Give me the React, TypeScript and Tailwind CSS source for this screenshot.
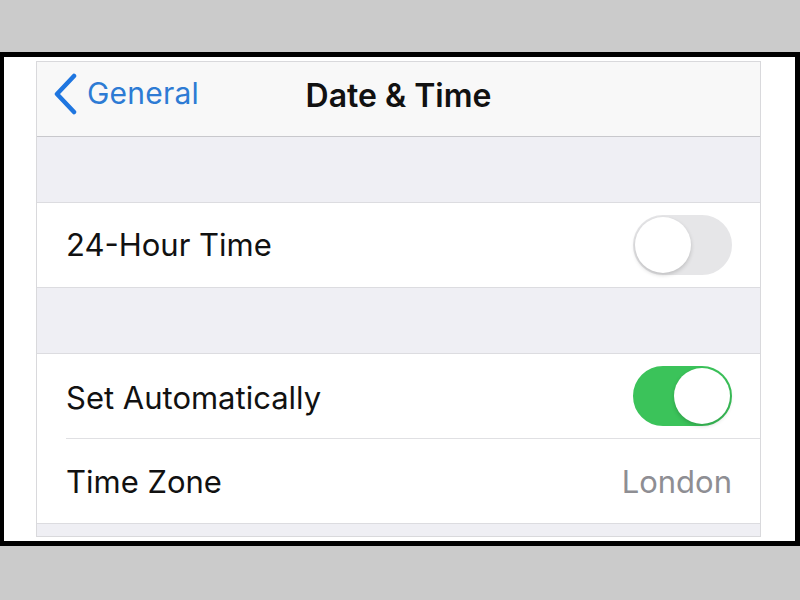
import { useState } from 'react'

interface SwitchProps {
  on: boolean
  onToggle: () => void
}

function Switch({ on, onToggle }: SwitchProps) {
  return (
    <button
      onClick={onToggle}
      className={`relative h-[60px] w-[99px] rounded-full border-2 transition-colors ${
        on ? 'border-[#3bc35a] bg-[#3bc35a]' : 'border-[#e6e6e8] bg-[#e6e6e8]'
      }`}
    >
      <span
        className={`absolute top-[0px] h-[56px] w-[56px] rounded-full bg-white shadow-[0_2px_4px_rgba(0,0,0,0.18)] transition-all ${
          on ? 'left-[39px]' : 'left-[0px]'
        }`}
      />
    </button>
  )
}

export default function App() {
  const [hour24, setHour24] = useState(false)
  const [auto, setAuto] = useState(true)

  return (
    <div
      className="flex h-[600px] w-[800px] flex-col bg-[#cbcbcb] pt-[52px]"
      style={{ fontFamily: 'Inter, "Liberation Sans", sans-serif' }}
    >
      {/* framed phone capture */}
      <div className="flex h-[494px] flex-col border-t-[5px] border-r-[5px] border-b-[5px] border-l-4 border-black bg-white pt-1 pr-[34px] pb-1 pl-8">
        <div className="flex flex-1 flex-col border border-[#d9d9dc] bg-[#efeff4]">
          {/* Navigation bar */}
          <div className="relative flex h-[75px] items-center justify-center border-b border-[#c8c8cc] bg-[#f8f8f8] pb-[7px]">
            <button className="absolute left-[15px] top-[9px] flex items-center gap-[9px] text-[#2d7bd4]">
              <svg width="26" height="42" viewBox="0 0 26 42" fill="none">
                <path
                  d="M22 3 L5 21 L22 39"
                  stroke="#1f76e0"
                  strokeWidth="4.5"
                  strokeLinecap="round"
                  strokeLinejoin="round"
                />
              </svg>
              <span className="text-[30px] tracking-[0.2px]">General</span>
            </button>
            <span className="text-[32px] font-semibold text-[#111]">Date &amp; Time</span>
          </div>

          <div className="h-[66px] border-b border-[#dcdce0]" />

          {/* 24-hour group */}
          <div className="flex h-[85px] items-center justify-between border-b border-[#dcdce0] bg-white pr-[28px] pl-[29px]">
            <span className="text-[31px] text-[#111]">24-Hour Time</span>
            <Switch on={hour24} onToggle={() => setHour24(!hour24)} />
          </div>

          <div className="h-[66px] border-b border-[#dcdce0]" />

          {/* Automatic time group */}
          <div className="border-b border-[#dcdce0] bg-white">
            <div className="pl-[29px]">
              <div className="flex h-[85px] items-center justify-between border-b border-[#e0e0e3] pr-[28px]">
                <span className="pt-[5px] text-[31px] text-[#111]">Set Automatically</span>
                <Switch on={auto} onToggle={() => setAuto(!auto)} />
              </div>
            </div>
            <div className="flex h-[84px] items-center justify-between pt-[3px] pr-[28px] pl-[29px]">
              <span className="text-[31px] text-[#111]">Time Zone</span>
              <span className="text-[31px] text-[#8e8e93]">London</span>
            </div>
          </div>

          <div className="flex-1" />
        </div>
      </div>
    </div>
  )
}
